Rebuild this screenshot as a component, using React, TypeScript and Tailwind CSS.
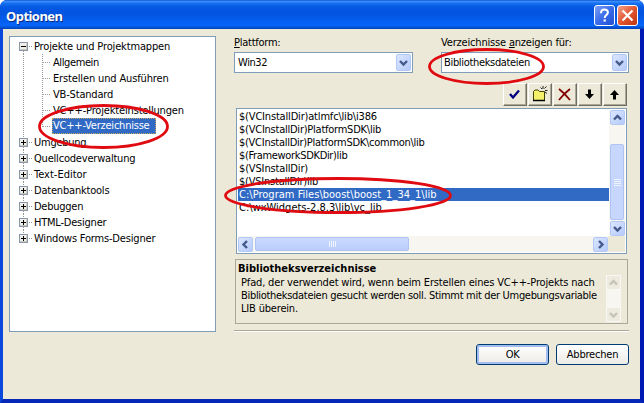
import type { ReactNode } from "react";

const DIR_ROWS = [
  { text: "$(VCInstallDir)atlmfc\\lib\\i386", ls: "tracking-[-0.18px]" },
  { text: "$(VCInstallDir)PlatformSDK\\lib", ls: "tracking-[-0.24px]" },
  { text: "$(VCInstallDir)PlatformSDK\\common\\lib", ls: "tracking-[-0.27px]" },
  { text: "$(FrameworkSDKDir)lib", ls: "tracking-[-0.33px]" },
  { text: "$(VSInstallDir)", ls: "tracking-[-0.15px]" },
  { text: "$(VSInstallDir)lib", ls: "tracking-[-0.22px]" },
  { text: "C:\\Program Files\\boost\\boost_1_34_1\\lib", ls: "tracking-[0.02px]", selected: true },
  { text: "C:\\wxWidgets-2.8.3\\lib\\vc_lib", ls: "" },
];

const CHILDREN = [
  { text: "Allgemein", ls: "tracking-[-0.4px]" },
  { text: "Erstellen und Ausführen", ls: "tracking-[-0.14px]" },
  { text: "VB-Standard", ls: "tracking-[-0.18px]" },
  { text: "VC++-Projekteinstellungen", ls: "tracking-[-0.16px]" },
  { text: "VC++-Verzeichnisse", ls: "tracking-[-0.22px]", selected: true },
];

const ROOTS = [
  { text: "Umgebung", ls: "tracking-[-0.25px]" },
  { text: "Quellcodeverwaltung", ls: "tracking-[-0.2px]" },
  { text: "Text-Editor", ls: "" },
  { text: "Datenbanktools", ls: "tracking-[-0.2px]" },
  { text: "Debuggen", ls: "tracking-[-0.25px]" },
  { text: "HTML-Designer", ls: "tracking-[-0.22px]" },
  { text: "Windows Forms-Designer", ls: "tracking-[-0.18px]" },
];

function Expander({ open, last }: { open?: boolean; last?: boolean }) {
  return (
    <svg width="14" height="16" className="shrink-0" shapeRendering="crispEdges">
      <path d={(open ? "" : "M4.5 0V4") + (last ? "" : "M4.5 13V16")} stroke="#9a9a9a" strokeDasharray="1 1" />
      <path d="M10 8.5H13" stroke="#9a9a9a" strokeDasharray="1 1" />
      <rect x="0.5" y="4.5" width="8" height="8" fill="#f1efe9" stroke="#8797ab" />
      <path d="M1 11.5H8M7.5 6V12" stroke="#cfc9bb" />
      <path d={open ? "M2 8.5H7" : "M2 8.5H7M4.5 6V11"} stroke="#000" />
    </svg>
  );
}

function Branch({ last }: { last?: boolean }) {
  return (
    <svg width="33" height="16" className="shrink-0" shapeRendering="crispEdges">
      <path d="M4.5 0V16" stroke="#9a9a9a" strokeDasharray="1 1" />
      <path d={last ? "M23.5 0V9" : "M23.5 0V16"} stroke="#9a9a9a" strokeDasharray="1 1" />
      <path d="M24 8.5H32" stroke="#9a9a9a" strokeDasharray="1 1" />
    </svg>
  );
}

const CHEVRONS = {
  up: "M4 9.5L7.5 6L11 9.5",
  down: "M4 6L7.5 9.5L11 6",
  left: "M9 4L5.5 7.5L9 11",
  right: "M6 4L9.5 7.5L6 11",
};

function ScrollButton({ dir, off, tall }: { dir: keyof typeof CHEVRONS; off?: boolean; tall?: boolean }) {
  return (
    <div
      className={
        (off ? "border-[#f8f7f2] bg-[#edebdf] " : "border-[#b4c8f6] bg-linear-to-br from-[#dbe6ff] to-[#b6cbfb] ") +
        (tall ? "h-[17px] " : "h-[15px] ") +
        "flex w-[15px] shrink-0 items-center justify-center rounded-[2px] border"
      }
    >
      <svg width="15" height="15" className="shrink-0">
        <path d={CHEVRONS[dir]} fill="none" stroke={off ? "#c5c3b8" : "#43598a"} strokeWidth="2.4" />
      </svg>
    </div>
  );
}

function Combo({ text, width, ls }: { text: string; width: string; ls: string }) {
  return (
    <div className={"flex h-[21px] items-center border border-[#7f9db9] bg-white pr-px " + width}>
      <span className={"flex-1 " + ls}>{text}</span>
      <ScrollButton dir="down" tall />
    </div>
  );
}

function ToolButton({ children }: { children: ReactNode }) {
  return (
    <div className="h-[23px] w-6 border border-t-white border-r-[#716f64] border-b-[#716f64] border-l-white bg-[#ece9d8]">
      <div className="flex h-[21px] w-[22px] items-center justify-center border-r border-b border-[#aca899]">
        <svg width="21" height="20">{children}</svg>
      </div>
    </div>
  );
}

function Callout({ place, w, h }: { place: string; w: number; h: number }) {
  return (
    <svg width={w} height={h} className={"absolute " + place}>
      <ellipse cx={w / 2} cy={h / 2} rx={w / 2 - 1.5} ry={h / 2 - 1.5} fill="none" stroke="#e00b10" strokeWidth="2.8" />
    </svg>
  );
}

export default function App() {
  return (
    <div className="relative flex h-[403px] w-[644px] flex-col overflow-hidden bg-white font-['DejaVu_Sans_Condensed','DejaVu_Sans',sans-serif] text-[11px] leading-[13px] whitespace-nowrap text-black">
      <div className="flex h-[403px] flex-col overflow-hidden rounded-t-[7px] bg-[#0831d9]">
        <div className="flex h-[29px] shrink-0 items-center bg-[linear-gradient(180deg,#0a55d8_0%,#3c8cf8_5%,#1570f0_12%,#0558e4_24%,#0355e0_48%,#045ff2_75%,#0666fb_87%,#0454d8_94%,#0040b8_100%)] pr-[6px] pl-[6px]">
          <span className="flex-1 pt-[3px] font-['Noto_Sans','Open_Sans',sans-serif] text-[13px] leading-4 font-bold tracking-[-0.55px] text-white [text-shadow:1px_1px_0_#0a2a80]">Optionen</span>
          <div className="flex gap-[2px] pt-[2px]">
            <div className="flex size-[21px] items-center justify-center rounded-[3px] border border-white bg-linear-to-br from-[#7da0f5] via-[#3a6bea] to-[#1f50d0]">
              <svg width="19" height="19">
                <path d="M6 7.2C6 4.5 7.3 3.6 9.3 3.6C11.5 3.6 12.9 4.8 12.9 6.6C12.9 9.2 9.7 9 9.7 12" fill="none" stroke="#fff" strokeWidth="2" />
                <rect x="8.6" y="13.4" width="2.2" height="2.2" fill="#fff" />
              </svg>
            </div>
            <div className="flex size-[21px] items-center justify-center rounded-[3px] border border-white bg-linear-to-br from-[#f0a088] via-[#e2552f] to-[#c03510]">
              <svg width="19" height="19">
                <path d="M4.5 4.5L14.5 14.5M14.5 4.5L4.5 14.5" stroke="#fff" strokeWidth="2.2" />
              </svg>
            </div>
          </div>
        </div>

        <div className="flex h-[374px] border-t-0 border-r-4 border-b-4 border-l-[3px] border-r-[#0019b5] border-b-[#0528b8] border-l-[#0b48dc] bg-[#ece9d8] pl-[6px]">
          <div className="mt-[7px] h-[296px] w-[207px] shrink-0 border border-[#7f9db9] bg-white pt-[1px] pl-[9px]">
            <div className="flex h-4 items-center">
              <Expander open />
              <span className="pl-px tracking-[-0.15px]">Projekte und Projektmappen</span>
            </div>
            {CHILDREN.map((c, i) => (
              <div key={c.text} className="flex h-4 items-center">
                <Branch last={i === 4} />
                <span className={(c.selected ? "h-4 w-[104px] border border-dotted border-[#c8a860] bg-[#316ac5] leading-[14px] text-white " : "pl-px ") + c.ls}>
                  {c.text}
                </span>
              </div>
            ))}
            {ROOTS.map((r, i) => (
              <div key={r.text} className="flex h-4 items-center">
                <Expander last={i === 6} />
                <span className={"pl-px " + r.ls}>{r.text}</span>
              </div>
            ))}
          </div>

          <div className="ml-[18px] flex w-[395px] flex-col">
            <div className="flex pt-[7px]">
              <div className="w-[207px]">
                <div className="h-4 leading-[14px] tracking-[-0.25px]"><u>P</u>lattform:</div>
                <Combo text="Win32" width="w-[179px]" ls="pl-[3px] tracking-[-0.4px]" />
              </div>
              <div className="w-[188px]">
                <div className="h-4 leading-[14px] tracking-[-0.18px]">Verzeichnisse <u>a</u>nzeigen für:</div>
                <Combo text="Bibliotheksdateien" width="w-[188px]" ls="pl-[2px] tracking-[-0.33px]" />
              </div>
            </div>

            <div className="mt-[10px] flex justify-end gap-px pr-[2px]">
              <ToolButton>
                <path d="M6 10L9 13.5L15 6.5" fill="none" stroke="#000080" strokeWidth="2.3" />
              </ToolButton>
              <ToolButton>
                <path d="M4.5 16.500V7.500L6 6H9L10.500 7.500H15.500V16.500Z" fill="#f4f06a" stroke="#404000" />
                <path d="M4 16.500H16" stroke="#000" strokeWidth="1.500" />
                <path d="M14 2V5M17.500 2.500L15.500 4.500M11.500 3.500L13 5M16 6.500H18.500M16 8L18 9.500" stroke="#222" />
              </ToolButton>
              <ToolButton>
                <path d="M5 5C9 8 12 11 16 16M16 5C12 8 8 12 5 16" fill="none" stroke="#800000" strokeWidth="1.800" />
              </ToolButton>
              <ToolButton>
                <path d="M9 5.500H12V10H15L10.500 15L6 10H9Z" fill="#000" />
              </ToolButton>
              <ToolButton>
                <path d="M9 15.500H12V11H15L10.500 6L6 11H9Z" fill="#000" />
              </ToolButton>
            </div>

            <div className="mt-[2px] ml-[2px] flex h-[146px] w-[391px] flex-col border border-[#7f9db9] bg-white p-px">
              <div className="flex h-[127px]">
                <div className="flex-1">
                  {DIR_ROWS.map((r) => (
                    <div key={r.text} className={"h-[13px] pl-px " + (r.selected ? "bg-[#316ac5] text-white " : "") + r.ls}>
                      {r.text}
                    </div>
                  ))}
                </div>
                <div className="flex w-4 flex-col items-center bg-[#f7f6f1]">
                  <ScrollButton dir="up" />
                  <div className="mt-[19px] mb-px flex w-[14px] flex-1 flex-col items-center justify-center gap-px rounded-[2px] border border-[#afc3f3] bg-[#c6d6fd]">
                    {[0, 1, 2, 3].map((n) => (
                      <div key={n} className="h-px w-[7px] bg-[#eef4fe]" />
                    ))}
                  </div>
                  <ScrollButton dir="down" />
                </div>
              </div>
              <div className="flex h-4 items-center bg-[#ece9d8]">
                <div className="flex h-4 flex-1 items-center bg-[#f7f6f1]">
                  <ScrollButton dir="left" />
                  <div className="ml-[2px] flex h-[14px] w-[154px] items-center justify-center gap-px rounded-[2px] border border-[#afc3f3] bg-linear-to-b from-[#cbdafe] to-[#bacdfb]">
                    {[0, 1, 2, 3].map((n) => (
                      <div key={n} className="h-[6px] w-px bg-[#eef4fe]" />
                    ))}
                  </div>
                  <div className="flex-1" />
                  <ScrollButton dir="right" />
                </div>
                <div className="w-[17px]" />
              </div>
            </div>

            <div className="mt-[5px] ml-px flex h-[65px] w-[393px] border border-[#aca899]">
              <div className="w-0 flex-1 pt-[2px] pl-[2px]">
                <div className="h-[14px] font-bold">Bibliotheksverzeichnisse</div>
                <div className="pl-[3px]">
                  <div className="tracking-[-0.16px]">Pfad, der verwendet wird, wenn beim Erstellen eines VC++-Projekts nach</div>
                  <div className="tracking-[-0.31px]">Bibliotheksdateien gesucht werden soll. Stimmt mit der Umgebungsvariable</div>
                  <div className="tracking-[-0.18px]">LIB überein.</div>
                </div>
              </div>
              <div className="mt-[15px] mr-[6px] flex h-[47px] w-[15px] flex-col justify-between bg-[#f7f6f1]">
                <ScrollButton dir="up" off />
                <ScrollButton dir="down" off />
              </div>
            </div>

            <div className="mt-[6px] h-[2px] border-t border-b border-t-[#aca899] border-b-white" />

            <div className="mt-[12px] flex justify-end gap-[7px]">
              <div className="flex h-[21px] w-[73px] items-center justify-center rounded-[3px] border border-[#003c74] bg-linear-to-b from-white to-[#ecebe6] tracking-[-0.3px] shadow-[inset_0_0_0_2px_#a3bdf0]">OK</div>
              <div className="flex h-[21px] w-[73px] items-center justify-center rounded-[3px] border border-[#003c74] bg-linear-to-b from-white to-[#ecebe6] tracking-[-0.2px]">Abbrechen</div>
            </div>
          </div>
        </div>
      </div>

      <Callout place="top-[104px] left-[38px]" w={131} h={45} />
      <Callout place="top-[48px] left-[428px]" w={117} h={37} />
      <Callout place="top-[177px] left-[224px]" w={228} h={37} />
    </div>
  );
}
